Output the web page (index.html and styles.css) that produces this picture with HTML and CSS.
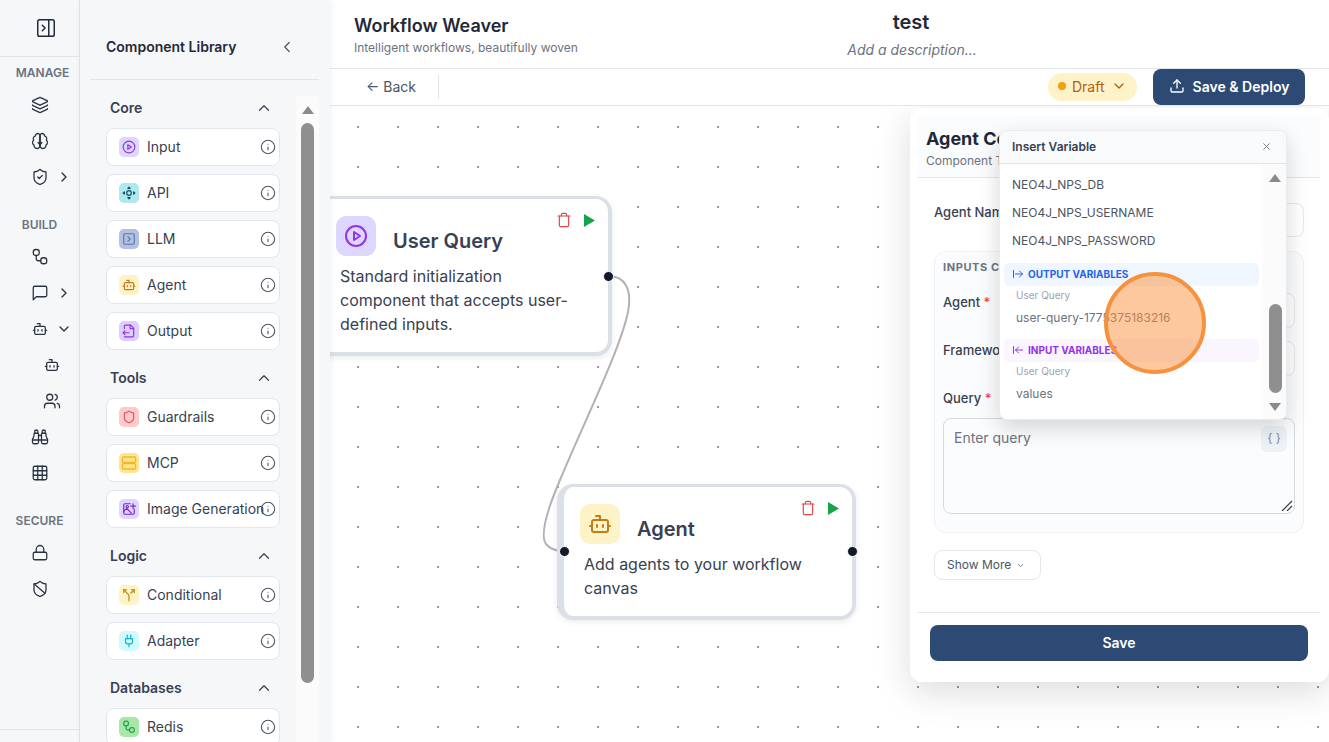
FILE: index.html
```html
<!DOCTYPE html>
<html lang="en">
<head>
<meta charset="utf-8">
<title>Workflow Weaver</title>
<link rel="stylesheet" href="styles.css">
</head>
<body>
<svg class="defs" aria-hidden="true">
  <symbol id="i-panel" viewBox="0 0 24 24"><rect x="3" y="3" width="18" height="18" rx="2"/><path d="M15 3v18"/><path d="m8 9 3 3-3 3"/></symbol>
  <symbol id="i-layers" viewBox="0 0 24 24"><path d="M12.83 2.18a2 2 0 0 0-1.66 0L2.6 6.08a1 1 0 0 0 0 1.83l8.58 3.91a2 2 0 0 0 1.66 0l8.58-3.9a1 1 0 0 0 0-1.83z"/><path d="M2 12a1 1 0 0 0 .58.91l8.6 3.91a2 2 0 0 0 1.65 0l8.58-3.9A1 1 0 0 0 22 12"/><path d="M2 17a1 1 0 0 0 .58.91l8.6 3.91a2 2 0 0 0 1.65 0l8.58-3.9A1 1 0 0 0 22 17"/></symbol>
  <symbol id="i-brain" viewBox="0 0 24 24"><path d="M12 5a3 3 0 1 0-5.997.125 4 4 0 0 0-2.526 5.77 4 4 0 0 0 .556 6.588A4 4 0 1 0 12 18Z"/><path d="M12 5a3 3 0 1 1 5.997.125 4 4 0 0 1 2.526 5.77 4 4 0 0 1-.556 6.588A4 4 0 1 1 12 18Z"/><path d="M12 5v14"/><path d="m9.5 14 2.500 3 2.500-3"/></symbol>
  <symbol id="i-shieldcheck" viewBox="0 0 24 24"><path d="M20 13c0 5-3.500 7.500-7.660 8.950a1 1 0 0 1-.67-.01C7.500 20.500 4 18 4 13V6a1 1 0 0 1 1-1c2 0 4.500-1.200 6.240-2.720a1.170 1.170 0 0 1 1.520 0C14.510 3.810 17 5 19 5a1 1 0 0 1 1 1z"/><path d="m9 12 2 2 4-4"/></symbol>
  <symbol id="i-flow" viewBox="0 0 24 24"><rect x="3" y="2" width="8" height="8" rx="3.500"/><path d="M7 10v4a3 3 0 0 0 3 3h3"/><rect x="13" y="13" width="8" height="8" rx="3.500"/></symbol>
  <symbol id="i-msg" viewBox="0 0 24 24"><path d="M21 15a2 2 0 0 1-2 2H7l-4 4V5a2 2 0 0 1 2-2h14a2 2 0 0 1 2 2z"/></symbol>
  <symbol id="i-bot" viewBox="0 0 24 24"><path d="M12 8V4H8"/><rect x="4" y="8" width="16" height="12" rx="2"/><path d="M2 14h2"/><path d="M20 14h2"/><path d="M15 13v2"/><path d="M9 13v2"/></symbol>
  <symbol id="i-users" viewBox="0 0 24 24"><path d="M16 21v-2a4 4 0 0 0-4-4H6a4 4 0 0 0-4 4v2"/><circle cx="9" cy="7" r="4"/><path d="M22 21v-2a4 4 0 0 0-3-3.870"/><path d="M16 3.130a4 4 0 0 1 0 7.750"/></symbol>
  <symbol id="i-binoc" viewBox="0 0 24 24"><path d="M10 10h4"/><path d="M19 7V4a1 1 0 0 0-1-1h-2a1 1 0 0 0-1 1v3"/><path d="M20 21a2 2 0 0 0 2-2v-3.851c0-1.390-2-2.962-2-4.829V8a1 1 0 0 0-1-1h-4a1 1 0 0 0-1 1v11a2 2 0 0 0 2 2z"/><path d="M22 16H2"/><path d="M4 21a2 2 0 0 1-2-2v-3.851c0-1.390 2-2.962 2-4.829V8a1 1 0 0 1 1-1h4a1 1 0 0 1 1 1v11a2 2 0 0 1-2 2z"/><path d="M9 7V4a1 1 0 0 0-1-1H6a1 1 0 0 0-1 1v3"/></symbol>
  <symbol id="i-grid" viewBox="0 0 24 24"><rect x="3" y="3" width="18" height="18" rx="2"/><path d="M3 9h18"/><path d="M3 15h18"/><path d="M9 3v18"/><path d="M15 3v18"/></symbol>
  <symbol id="i-lock" viewBox="0 0 24 24"><rect x="3" y="11" width="18" height="10" rx="2"/><path d="M7 11V7a5 5 0 0 1 10 0v4"/></symbol>
  <symbol id="i-shieldban" viewBox="0 0 24 24"><path d="M20 13c0 5-3.500 7.500-7.660 8.950a1 1 0 0 1-.67-.01C7.500 20.500 4 18 4 13V6a1 1 0 0 1 1-1c2 0 4.500-1.200 6.240-2.720a1.170 1.170 0 0 1 1.520 0C14.510 3.810 17 5 19 5a1 1 0 0 1 1 1z"/><path d="m4.243 5.210 14.390 12.472"/></symbol>
  <symbol id="i-shield" viewBox="0 0 24 24"><path d="M20 13c0 5-3.500 7.500-7.660 8.950a1 1 0 0 1-.67-.01C7.500 20.500 4 18 4 13V6a1 1 0 0 1 1-1c2 0 4.500-1.200 6.240-2.720a1.170 1.170 0 0 1 1.520 0C14.510 3.810 17 5 19 5a1 1 0 0 1 1 1z"/></symbol>
  <symbol id="i-right" viewBox="0 0 24 24"><path d="m9 18 6-6-6-6"/></symbol>
  <symbol id="i-left" viewBox="0 0 24 24"><path d="m15 18-6-6 6-6"/></symbol>
  <symbol id="i-down" viewBox="0 0 24 24"><path d="m6 9 6 6 6-6"/></symbol>
  <symbol id="i-up" viewBox="0 0 24 24"><path d="m18 15-6-6-6 6"/></symbol>
  <symbol id="i-info" viewBox="0 0 24 24"><circle cx="12" cy="12" r="10"/><path d="M12 16v-4"/><path d="M12 8h.01"/></symbol>
  <symbol id="i-play" viewBox="0 0 24 24"><circle cx="12" cy="12" r="10"/><path d="m10 8 6 4-6 4z"/></symbol>
  <symbol id="i-api" viewBox="0 0 24 24"><circle cx="12" cy="12" r="4"/><path d="m10 4 2-2 2 2z"/><path d="m10 20 2 2 2-2z"/><path d="m4 10-2 2 2 2z"/><path d="m20 10 2 2-2 2z"/></symbol>
  <symbol id="i-llm" viewBox="0 0 24 24"><rect x="3" y="3" width="18" height="18" rx="2"/><path d="m10 8 4 4-4 4"/></symbol>
  <symbol id="i-output" viewBox="0 0 24 24"><path d="M4 8V4a2 2 0 0 1 2-2h9l5 5v13a2 2 0 0 1-2 2H4"/><path d="M14 2v6h6"/><path d="M2 15h10"/><path d="m5 12-3 3 3 3"/></symbol>
  <symbol id="i-server" viewBox="0 0 24 24"><rect x="2" y="3" width="20" height="8" rx="2"/><rect x="2" y="13" width="20" height="8" rx="2"/></symbol>
  <symbol id="i-image" viewBox="0 0 24 24"><path d="M21 12v7a2 2 0 0 1-2 2H5a2 2 0 0 1-2-2V5a2 2 0 0 1 2-2h9"/><path d="m3 16 5-5 8 8"/><circle cx="9" cy="8" r="2"/><path d="M19 3v8"/><path d="M15 7h8"/></symbol>
  <symbol id="i-split" viewBox="0 0 24 24"><path d="M16 3h5v5"/><path d="M8 3H3v5"/><path d="M12 22v-8.300a4 4 0 0 0-1.172-2.872L3 3"/><path d="m15 9 6-6"/></symbol>
  <symbol id="i-plug" viewBox="0 0 24 24"><path d="M12 22v-5"/><path d="M9 8V2"/><path d="M15 8V2"/><path d="M18 8v5a4 4 0 0 1-4 4h-4a4 4 0 0 1-4-4V8Z"/></symbol>
  <symbol id="i-trash" viewBox="0 0 24 24"><path d="M3 6h18"/><path d="M19 6v14c0 1-1 2-2 2H7c-1 0-2-1-2-2V6"/><path d="M8 6V4c0-1 1-2 2-2h4c1 0 2 1 2 2v2"/></symbol>
  <symbol id="i-upload" viewBox="0 0 24 24"><path d="M21 15v4a2 2 0 0 1-2 2H5a2 2 0 0 1-2-2v-4"/><path d="m17 8-5-5-5 5"/><path d="M12 3v12"/></symbol>
  <symbol id="i-x" viewBox="0 0 24 24"><path d="M18 6 6 18"/><path d="m6 6 12 12"/></symbol>
  <symbol id="i-out" viewBox="0 0 24 24"><path d="M3 5v14"/><path d="M21 12H7"/><path d="m15 18 6-6-6-6"/></symbol>
  <symbol id="i-in" viewBox="0 0 24 24"><path d="M3 5v14"/><path d="M21 12H7"/><path d="m13 18-6-6 6-6"/></symbol>
</svg>

<div class="app">
  <nav class="rail">
    <div class="rail-top"><svg class="i i-22 thin"><use href="#i-panel"/></svg></div>
    <div class="rail-label rail-label-first">MANAGE</div>
    <div class="rail-row"><svg class="i i-18"><use href="#i-layers"/></svg></div>
    <div class="rail-row"><svg class="i i-18"><use href="#i-brain"/></svg></div>
    <div class="rail-row"><svg class="i i-18"><use href="#i-shieldcheck"/></svg><svg class="i i-16"><use href="#i-right"/></svg></div>
    <div class="rail-label">BUILD</div>
    <div class="rail-row"><svg class="i i-18"><use href="#i-flow"/></svg></div>
    <div class="rail-row"><svg class="i i-18"><use href="#i-msg"/></svg><svg class="i i-16"><use href="#i-right"/></svg></div>
    <div class="rail-row"><svg class="i i-18 rail-bot"><use href="#i-bot"/></svg><svg class="i i-16"><use href="#i-down"/></svg></div>
    <div class="rail-row rail-sub"><svg class="i i-18 rail-bot"><use href="#i-bot"/></svg></div>
    <div class="rail-row rail-sub"><svg class="i i-18"><use href="#i-users"/></svg></div>
    <div class="rail-row"><svg class="i i-18"><use href="#i-binoc"/></svg></div>
    <div class="rail-row"><svg class="i i-18"><use href="#i-grid"/></svg></div>
    <div class="rail-label">SECURE</div>
    <div class="rail-row"><svg class="i i-18"><use href="#i-lock"/></svg></div>
    <div class="rail-row"><svg class="i i-18"><use href="#i-shieldban"/></svg></div>
    <div class="rail-foot"></div>
  </nav>

  <aside class="library">
    <div class="lib-head">
      <span class="lib-title">Component Library</span>
      <svg class="i i-18 thin"><use href="#i-left"/></svg>
    </div>
    <div class="lib-body">
      <div class="lib-list">
        <section class="lib-sec">
          <div class="sec-head"><span class="sec-name">Core</span><svg class="i i-18 thin"><use href="#i-up"/></svg></div>
          <div class="lib-item"><span class="tile t-input"><svg class="i i-14"><use href="#i-play"/></svg></span><span class="item-name">Input</span><svg class="i i-16 info"><use href="#i-info"/></svg></div>
          <div class="lib-item"><span class="tile t-api"><svg class="i i-14"><use href="#i-api"/></svg></span><span class="item-name">API</span><svg class="i i-16 info"><use href="#i-info"/></svg></div>
          <div class="lib-item"><span class="tile t-llm"><svg class="i i-14"><use href="#i-llm"/></svg></span><span class="item-name">LLM</span><svg class="i i-16 info"><use href="#i-info"/></svg></div>
          <div class="lib-item"><span class="tile t-agent"><svg class="i i-14"><use href="#i-bot"/></svg></span><span class="item-name">Agent</span><svg class="i i-16 info"><use href="#i-info"/></svg></div>
          <div class="lib-item"><span class="tile t-output"><svg class="i i-14"><use href="#i-output"/></svg></span><span class="item-name">Output</span><svg class="i i-16 info"><use href="#i-info"/></svg></div>
        </section>
        <section class="lib-sec">
          <div class="sec-head"><span class="sec-name">Tools</span><svg class="i i-18 thin"><use href="#i-up"/></svg></div>
          <div class="lib-item"><span class="tile t-guard"><svg class="i i-14"><use href="#i-shield"/></svg></span><span class="item-name">Guardrails</span><svg class="i i-16 info"><use href="#i-info"/></svg></div>
          <div class="lib-item"><span class="tile t-mcp"><svg class="i i-16"><use href="#i-server"/></svg></span><span class="item-name">MCP</span><svg class="i i-16 info"><use href="#i-info"/></svg></div>
          <div class="lib-item"><span class="tile t-image"><svg class="i i-14"><use href="#i-image"/></svg></span><span class="item-name">Image Generation</span><svg class="i i-16 info"><use href="#i-info"/></svg></div>
        </section>
        <section class="lib-sec">
          <div class="sec-head"><span class="sec-name">Logic</span><svg class="i i-18 thin"><use href="#i-up"/></svg></div>
          <div class="lib-item"><span class="tile t-cond"><svg class="i i-14"><use href="#i-split"/></svg></span><span class="item-name">Conditional</span><svg class="i i-16 info"><use href="#i-info"/></svg></div>
          <div class="lib-item"><span class="tile t-adapter"><svg class="i i-14"><use href="#i-plug"/></svg></span><span class="item-name">Adapter</span><svg class="i i-16 info"><use href="#i-info"/></svg></div>
        </section>
        <section class="lib-sec">
          <div class="sec-head"><span class="sec-name">Databases</span><svg class="i i-18 thin"><use href="#i-up"/></svg></div>
          <div class="lib-item"><span class="tile t-redis"><svg class="i i-14"><use href="#i-flow"/></svg></span><span class="item-name">Redis</span><svg class="i i-16 info"><use href="#i-info"/></svg></div>
        </section>
      </div>
      <div class="lib-scroll">
        <span class="arrow-up"></span>
        <span class="lib-thumb"></span>
      </div>
    </div>
  </aside>

  <main class="main">
    <header class="top">
      <div class="brand">
        <h1 class="brand-title">Workflow Weaver</h1>
        <p class="brand-sub">Intelligent workflows, beautifully woven</p>
      </div>
      <div class="doc">
        <div class="doc-title">test</div>
        <div class="doc-desc">Add a description...</div>
      </div>
    </header>
    <div class="toolbar">
      <span class="back">← Back</span>
      <span class="tool-divider"></span>
      <span class="draft"><span class="draft-dot"></span>Draft<svg class="i i-16"><use href="#i-down"/></svg></span>
      <button class="deploy"><svg class="i i-16"><use href="#i-upload"/></svg>Save &amp; Deploy</button>
    </div>

    <div class="canvas">
      <svg class="edges" width="999" height="636" aria-hidden="true">
        <path d="M278 170 C296 170 302 184 298 206 C290 244 255 314 230 374 C215 409 209 434 218 440 C222 444 228 445 234 445"/>
      </svg>

      <article class="node node-query">
        <div class="node-actions"><svg class="i i-16 trash"><use href="#i-trash"/></svg><svg class="run" viewBox="0 0 11 13"><polygon points="0,0 11,6.500 0,13"/></svg></div>
        <div class="node-head">
          <span class="node-icon t-input"><svg class="i i-24"><use href="#i-play"/></svg></span>
          <h2 class="node-title">User Query</h2>
        </div>
        <p class="node-desc">Standard initialization component that accepts user-defined inputs.</p>
        <span class="handle handle-right handle-q"></span>
      </article>

      <article class="node node-agent">
        <div class="node-actions"><svg class="i i-16 trash"><use href="#i-trash"/></svg><svg class="run" viewBox="0 0 11 13"><polygon points="0,0 11,6.500 0,13"/></svg></div>
        <div class="node-head">
          <span class="node-icon t-agent"><svg class="i i-24"><use href="#i-bot"/></svg></span>
          <h2 class="node-title">Agent</h2>
        </div>
        <p class="node-desc">Add agents to your workflow canvas</p>
        <span class="handle handle-left handle-a"></span>
        <span class="handle handle-right handle-a"></span>
      </article>

      <section class="panel">
        <div class="panel-head">
          <div class="panel-title">Agent Configuration</div>
          <div class="panel-sub">Component Type: Agent</div>
        </div>
        <div class="panel-body">
          <div class="name-row">
            <span class="field-label name-label">Agent Name</span>
            <span class="box name-box"></span>
          </div>
          <div class="card">
            <div class="card-title">INPUTS CONFIGURATION</div>
            <div class="form-row"><span class="field-label">Agent <em>*</em></span><span class="box"></span></div>
            <div class="form-row"><span class="field-label">Framework</span><span class="box"></span></div>
            <div class="field-label query-label">Query <em>*</em></div>
            <div class="query-wrap">
              <textarea class="query" placeholder="Enter query"></textarea>
              <span class="var-btn">{ }</span>
              <svg class="grip" viewBox="0 0 12 11" aria-hidden="true"><path d="M1 11 11 1"/><path d="M6 11 11 6"/></svg>
            </div>
          </div>
          <button class="more"><span class="more-text">Show More</span><svg class="i i-12"><use href="#i-down"/></svg></button>
        </div>
        <div class="panel-foot"><button class="save">Save</button></div>

        <div class="popover">
          <div class="pop-head"><span>Insert Variable</span><svg class="i i-12"><use href="#i-x"/></svg></div>
          <div class="pop-body">
            <div class="pop-list">
              <div class="env">NEO4J_NPS_DB</div>
              <div class="env">NEO4J_NPS_USERNAME</div>
              <div class="env">NEO4J_NPS_PASSWORD</div>
              <div class="band band-out"><svg class="i i-12"><use href="#i-out"/></svg>OUTPUT VARIABLES</div>
              <div class="var-group">User Query</div>
              <div class="var-name">user-query-1775375183216</div>
              <div class="band band-in"><svg class="i i-12"><use href="#i-in"/></svg>INPUT VARIABLES</div>
              <div class="var-group">User Query</div>
              <div class="var-name">values</div>
            </div>
            <div class="pop-scroll">
              <span class="arrow-up"></span>
              <span class="pop-thumb"></span>
              <span class="arrow-down"></span>
            </div>
          </div>
        </div>
      </section>

      <div class="cursor-halo"></div>
    </div>
  </main>
</div>
</body>
</html>
```

FILE: styles.css
```css
* { box-sizing: border-box; }
html, body { margin: 0; height: 100%; }
body {
  font-family: Inter, "Liberation Sans", sans-serif;
  color: #1f2937;
  background: #fff;
  overflow: hidden;
}
.defs { position: absolute; width: 0; height: 0; }
.i { fill: none; stroke: currentColor; stroke-width: 2; stroke-linecap: round; stroke-linejoin: round; flex: none; }
.thin { stroke-width: 1.600; }
.i-12 { width: 12px; height: 12px; }
.i-14 { width: 14px; height: 14px; }
.i-16 { width: 16px; height: 16px; }
.i-18 { width: 18px; height: 18px; }
.i-22 { width: 22px; height: 22px; }
.i-24 { width: 24px; height: 24px; }

.app { display: flex; height: 742px; width: 1329px; }

/* Rail */
.rail {
  width: 80px; flex: none; background: #f6f7f9; border-right: 1px solid #e1e4e9;
  display: flex; flex-direction: column; position: relative; color: #2a3341;
}
.rail-top { height: 57px; flex: none; border-bottom: 1px solid #e1e4e9; padding: 17px 0 0 35px; color: #1f2937; }
.rail-label { height: 18px; line-height: 18px; margin-top: 21px; font-size: 12px; font-weight: 600; color: #6b7280; text-align: center; }
.rail-label-first { margin-top: 7px; padding-left: 6px; }
.rail-row { height: 36px; flex: none; display: flex; align-items: center; padding-left: 31px; gap: 7px; }
.rail-row .i-18 { stroke-width: 1.700; }
.rail-row .rail-bot { width: 16px; height: 16px; margin: 0 1px; stroke-width: 1.900; }
.rail-label + .rail-row { margin-top: 5px; }
.rail-sub { padding-left: 43px; }
.rail-foot { position: absolute; left: 0; right: 0; top: 729px; border-top: 1px solid #e1e4e9; }

/* Library */
.library {
  width: 250px; flex: none; background: #f6f7f9; display: flex; flex-direction: column;
  box-shadow: 1px 0 6px rgba(0, 0, 0, .06); position: relative; z-index: 2;
}
.lib-head {
  height: 80px; flex: none; margin: 0 11px 0 10px; padding: 16px 23px 2px 16px;
  border-bottom: 1px solid #e1e4e9; display: flex; align-items: center; justify-content: space-between;
  color: #4b5563;
}
.lib-title { font-size: 14px; font-weight: 600; color: #1f2937; }
.lib-body { flex: 1; display: flex; padding-top: 16px; padding-right: 11px; min-height: 0; }
.lib-list { flex: 1; padding: 2px 16px 0 26px; overflow: hidden; }
.lib-sec { margin-bottom: 18px; }
.sec-head {
  height: 20px; display: flex; align-items: center; justify-content: space-between;
  padding: 0 7px 0 4px; margin-bottom: 10px; font-size: 14px; font-weight: 600; color: #374151;
}
.sec-name { margin-top: -2px; }
.lib-item {
  height: 38px; margin-bottom: 8px; background: #fff; border: 1px solid #e2e5ea; border-radius: 8px;
  display: flex; align-items: center; padding: 0 5px 0 12px; font-size: 14px; color: #374151; position: relative;
}
.lib-sec .lib-item:last-child { margin-bottom: 0; }
.tile { width: 20px; height: 20px; flex: none; border-radius: 5px; display: flex; align-items: center; justify-content: center; }
.item-name { margin-left: 8px; margin-top: -2px; white-space: nowrap; }
.info { position: absolute; right: 3px; top: 10px; color: #4b5563; stroke-width: 1.600; }
.t-input { background: #ddd6fe; color: #9333ea; }
.t-api { background: #aee9ef; color: #164e63; }
.t-llm { background: #b2c0e2; color: #5d75ab; }
.t-agent { background: #fef3c7; color: #c27c1a; }
.t-output { background: #dccffb; color: #9333ea; }
.t-guard { background: #fecaca; color: #e05464; }
.t-mcp { background: #fde68a; color: #f5b430; }
.t-image { background: #ddd6fe; color: #7e22ce; }
.t-cond { background: #fef3c7; color: #b7860f; }
.t-adapter { background: #cffafe; color: #0fb5d4; }
.t-redis { background: #a8e6a9; color: #16a34a; }

.lib-scroll {
  width: 23px; flex: none; background: #fbfbfc; display: flex; flex-direction: column; align-items: center; padding-top: 10px;
}
.arrow-up, .arrow-down { width: 0; height: 0; border-left: 6px solid transparent; border-right: 6px solid transparent; flex: none; }
.arrow-up { border-bottom: 8px solid #8a8a8a; }
.arrow-down { border-top: 8px solid #8a8a8a; }
.lib-thumb { width: 13px; height: 560px; margin-top: 9px; background: #8f8f8f; border-radius: 7px; }

/* Main */
.main { flex: 1; min-width: 0; display: flex; flex-direction: column; }
.top { height: 69px; flex: none; display: flex; padding-left: 24px; border-bottom: 1px solid #e1e4e9; }
.brand { width: 377px; flex: none; padding-top: 15px; }
.brand-title { margin: 0; font-size: 18px; line-height: 22px; font-weight: 600; color: #1f2937; }
.brand-sub { margin: 3px 0 0; font-size: 12px; line-height: 16px; color: #6b7280; }
.doc { width: 362px; flex: none; text-align: center; padding-top: 10px; }
.doc-title { font-size: 20px; line-height: 24px; font-weight: 600; color: #1f2937; margin-right: 2px; }
.doc-desc { margin-top: 7px; font-size: 14px; line-height: 18px; font-style: italic; color: #6b7280; }
.toolbar {
  height: 37px; flex: none; display: flex; align-items: center; padding: 0 24px 0 36px;
  border-bottom: 1px solid #e1e4e9;
}
.back { font-size: 14px; color: #4b5563; margin-top: -2px; }
.tool-divider { width: 1px; height: 24px; margin-left: 22px; background: #e1e4e9; }
.draft {
  margin-left: auto; width: 89px; height: 28px; border-radius: 14px; background: #fdf2c8; color: #b45f0e;
  display: flex; align-items: center; padding: 0 0 2px 10px; font-size: 14px;
}
.draft-dot { width: 8px; height: 8px; border-radius: 50%; background: #f59e0b; margin-right: 6px; }
.draft .i { margin-left: 6px; }
.deploy {
  margin-left: 16px; width: 152px; height: 36px; border: 0; border-radius: 8px; background: #2d4a75; color: #fff; padding: 0 0 2px;
  font: 600 14px Inter, "Liberation Sans", sans-serif; display: flex; align-items: center; justify-content: center; gap: 8px;
}

/* Canvas */
.canvas {
  flex: 1; position: relative; overflow: hidden; background-color: #fff;
  background-image: radial-gradient(circle, #9a9a9a 1px, transparent 1.200px);
  background-size: 40px 40px; background-position: 8px 1px;
}
.edges { position: absolute; left: 0; top: 0; }
.edges path { fill: none; stroke: #b1b1b7; stroke-width: 2; }
.node {
  position: absolute; width: 300px; background: #fff; border: solid #dbe0e8; border-width: 3px 4px 4px 7px;
  border-radius: 16px; padding: 17px 16px 16px; box-shadow: 0 2px 6px rgba(0, 0, 0, .08);
}
.node-query { left: -18px; top: 90px; padding-left: 17px; }
.node-agent { left: 227px; top: 378px; width: 299px; }
.node-head { display: flex; }
.node-icon { width: 40px; height: 40px; border-radius: 10px; display: flex; align-items: center; justify-content: center; flex: none; }
.node-title { margin: 10px 0 0 17px; font-size: 20px; line-height: 30px; font-weight: 600; color: #374151; }
.node-desc { margin: 8px 0 0 4px; font-size: 16px; line-height: 24px; color: #374151; }
.node-query .node-desc { max-width: 240px; }
.node-actions { position: absolute; right: 13px; top: 13px; display: flex; align-items: center; gap: 12px; }
.trash { color: #dc4a4a; stroke-width: 1.800; }
.run { width: 11px; height: 13px; fill: #16a34a; }
.handle { position: absolute; width: 11px; height: 11px; border-radius: 50%; background: #14182b; border: 1px solid #fff; }
.handle-q { top: 71.500px; }
.handle-a { top: 58.500px; }
.handle-left { left: -5.500px; }
.handle-right { right: -5.500px; }

/* Panel */
.panel {
  position: absolute; left: 580px; top: 2px; width: 419px; height: 574px; background: #fff; border-radius: 12px;
  padding: 8px 9px 0 8px; box-shadow: 0 10px 36px rgba(0, 0, 0, .14); z-index: 3;
  display: flex; flex-direction: column;
}
.panel-head { height: 62px; flex: none; background: #fbfcfd; border-bottom: 1px solid #e1e4e9; padding: 8px 8px 0; }
.panel-title { font-size: 18px; line-height: 30px; font-weight: 700; color: #1f2937; white-space: nowrap; }
.panel-sub { font-size: 12px; line-height: 16px; margin-top: -1px; color: #6b7280; white-space: nowrap; }
.panel-body { flex: 1; padding: 25px 16px 0; }
.name-row { display: flex; align-items: stretch; height: 34px; }
.field-label { font-size: 13px; line-height: 18px; font-weight: 500; color: #374151; }
.name-label { width: 86px; flex: none; }
.box { flex: 1; display: block; border: 1px solid #e5e7eb; border-radius: 8px; background: #fff; }
.card { margin-top: 14px; height: 282px; border: 1px solid #eef0f3; border-radius: 12px; background: #fbfcfd; padding: 7px 8px 0; }
.card-title { font-size: 11px; line-height: 16px; font-weight: 700; letter-spacing: .6px; color: #6b7280; margin-bottom: 18px; white-space: nowrap; }
.form-row { display: flex; align-items: stretch; height: 35px; margin-bottom: 13px; }
.form-row .field-label { width: 80px; flex: none; }
.field-label em { font-style: normal; color: #ef4444; }
.query-label { line-height: 18px; margin-top: 12px; margin-bottom: 11px; }
.query-wrap { position: relative; height: 96px; }
.query {
  display: block; width: 100%; height: 96px; resize: none; border: 1px solid #d5d9df; border-radius: 8px; background: #fbfcfe;
  padding: 9px 10px; font: 14px/20px Inter, "Liberation Sans", sans-serif; color: #374151;
}
.query::placeholder { color: #6b7280; opacity: 1; }
.var-btn {
  position: absolute; right: 8px; top: 8px; width: 26px; height: 26px; border-radius: 6px; background: #eef2f7;
  color: #7c8ba1; font-size: 12px; padding-bottom: 3px; display: flex; align-items: center; justify-content: center;
}
.grip { position: absolute; right: 2px; bottom: 3px; width: 12px; height: 11px; fill: none; stroke: #3f3f46; stroke-width: 1.200; }
.more {
  display: flex; align-items: center; gap: 5px; margin-top: 17px; width: 107px; height: 30px; padding: 0 0 0 12px;
  background: #fff; border: 1px solid #e5e7eb; border-radius: 8px; font: 12px Inter, "Liberation Sans", sans-serif; color: #4b5563;
}
.more-text { margin-top: -2px; }
.more .i { width: 9px; height: 9px; }
.panel-foot { flex: none; height: 70px; border-top: 1px solid #e1e4e9; padding: 12px 12px 0; }
.save {
  width: 100%; height: 36px; border: 0; border-radius: 8px; background: #2d4a75; color: #fff; padding: 0 0 2px;
  font: 600 14px Inter, "Liberation Sans", sans-serif;
}

/* Popover */
.popover {
  position: absolute; left: 89px; top: 22px; width: 288px; height: 290px; background: #fff; border-radius: 8px;
  border: 1px solid #e9ebef; box-shadow: 0 8px 22px rgba(0, 0, 0, .16); display: flex; flex-direction: column; overflow: hidden;
}
.pop-head {
  height: 33px; flex: none; background: #f9fafb; border-bottom: 1px solid #e1e4e9; padding: 0 14px 2px 12px;
  display: flex; align-items: center; justify-content: space-between; font-size: 12px; font-weight: 600; color: #374151;
}
.pop-head .i { color: #6b7280; width: 11px; height: 11px; }
.pop-body { flex: 1; display: flex; min-height: 0; }
.pop-list { flex: 1; padding: 7px 3px 0 4px; overflow: hidden; }
.env { height: 28px; line-height: 28px; padding-left: 8px; font-size: 12px; color: #4b5563; }
.band { height: 23px; margin-top: 8px; border-radius: 5px; display: flex; align-items: center; gap: 4px; padding: 0 0 2px 8px; font-size: 10px; font-weight: 700; white-space: nowrap; }
.band-out { background: #eff6ff; color: #2563eb; }
.band-in { margin-top: 7px; background: #faf5ff; color: #9333ea; }
.var-group { height: 14px; line-height: 14px; margin-top: 2px; padding-left: 12px; font-size: 10px; color: #9ca3af; }
.var-name { height: 29px; line-height: 29px; margin-top: 1px; padding-left: 12px; font-size: 12px; color: #6b7280; white-space: nowrap; }
.pop-scroll { width: 24px; flex: none; background: #fbfbfc; display: flex; flex-direction: column; align-items: center; padding: 10px 0 0 2px; }
.pop-thumb { width: 13px; height: 89px; margin-top: 122px; background: #8f8f8f; border-radius: 7px; }
.pop-scroll .arrow-down { margin-top: 10px; }

/* Cursor highlight */
.cursor-halo {
  position: absolute; left: 774px; top: 166px; width: 102px; height: 102px; border-radius: 50%;
  background: rgba(251, 146, 60, .5); border: 4.500px solid #f6923e; z-index: 4;
}
```
